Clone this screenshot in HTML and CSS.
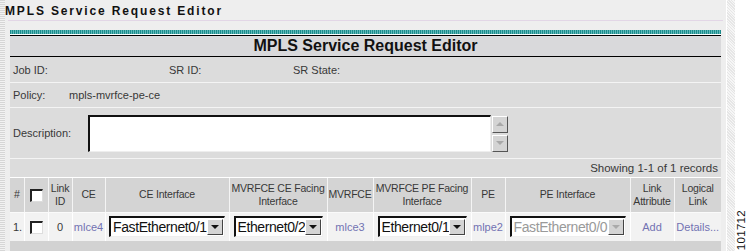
FILE: index.html
```html
<!DOCTYPE html>
<html lang="en">
<head>
  <meta charset="UTF-8" />
  <title>MPLS Service Request Editor</title>
  <link rel="stylesheet" href="styles.css">
</head>
<body>
  <div class="page">
    <div class="edge"></div>
    <div class="main">
      <div class="page-title">MPLS Service Request Editor</div>
      <div class="rule"></div>
      <div class="panel">
        <div class="band"></div>
        <div class="panel-head">MPLS Service Request Editor</div>
        <div class="row info">
          <span class="job">Job ID:</span>
          <span class="srid">SR ID:</span>
          <span class="state">SR State:</span>
        </div>
        <div class="row policy">
          <span class="label">Policy:</span>
          <span>mpls-mvrfce-pe-ce</span>
        </div>
        <div class="row desc">
          <span class="label">Description:</span>
          <div class="textarea">
            <div class="text-box"></div>
            <div class="scroll">
              <span class="sbtn"><i class="tri up"></i></span>
              <span class="sbtn"><i class="tri down"></i></span>
            </div>
          </div>
        </div>
        <div class="row count">Showing 1-1 of 1 records</div>
        <table class="grid">
          <colgroup>
            <col style="width:14px"><col style="width:24px"><col style="width:24px"><col style="width:33px">
            <col style="width:124px"><col style="width:98px"><col style="width:46px"><col style="width:98px">
            <col style="width:34px"><col style="width:125px"><col style="width:44px"><col style="width:47px">
          </colgroup>
          <thead>
            <tr>
              <th>#</th>
              <th><span class="check"></span></th>
              <th>Link<br>ID</th>
              <th>CE</th>
              <th>CE Interface</th>
              <th>MVRFCE CE Facing<br>Interface</th>
              <th>MVRFCE</th>
              <th>MVRFCE PE Facing<br>Interface</th>
              <th>PE</th>
              <th>PE Interface</th>
              <th>Link<br>Attribute</th>
              <th>Logical<br>Link</th>
            </tr>
          </thead>
          <tbody>
            <tr>
              <td class="num">1.</td>
              <td><span class="check"></span></td>
              <td>0</td>
              <td><a href="#">mlce4</a></td>
              <td><div class="select wide"><span class="val">FastEthernet0/1</span><span class="arrow"><i class="tri down"></i></span></div></td>
              <td><div class="select"><span class="val">Ethernet0/2</span><span class="arrow"><i class="tri down"></i></span></div></td>
              <td><a href="#">mlce3</a></td>
              <td><div class="select"><span class="val">Ethernet0/1</span><span class="arrow"><i class="tri down"></i></span></div></td>
              <td><a href="#">mlpe2</a></td>
              <td><div class="select wide off"><span class="val">FastEthernet0/0</span><span class="arrow"><i class="tri down"></i></span></div></td>
              <td><a href="#">Add</a></td>
              <td><a href="#">Details...</a></td>
            </tr>
          </tbody>
        </table>
        <div class="foot"></div>
      </div>
    </div>
    <div class="dots"></div>
    <div class="side"><span class="fig">101712</span></div>
  </div>
</body>
</html>
```

FILE: styles.css
```css
* {
  margin: 0;
  padding: 0;
  box-sizing: border-box;
}
body {
  font-family: 'Liberation Sans', Arial, sans-serif;
  font-size: 11px;
  color: #383838;
  background: #fff;
}
.page {
  display: flex;
  height: 251px;
  overflow: hidden;
}
.edge {
  width: 5px;
  background: repeating-linear-gradient(0deg, #d6d6d6 0 1px, #f2f2f2 1px 2px);
}
.main {
  width: 722px;
  background: #eeeeee;
  display: flex;
  flex-direction: column;
}
.main > *,
.panel > * {
  flex-shrink: 0;
}
.page-title {
  font-size: 12px;
  font-weight: bold;
  letter-spacing: 1.85px;
  color: #111;
  padding: 4px 0 0 0;
  height: 20px;
}
.rule {
  height: 1px;
  margin: 0 3px 0 3px;
  background: #e2d6e6;
}
.panel {
  margin: 9px 0 0 5px;
  width: 711px;
  background: #dcdcdc;
  flex: 1 0 auto;
}
.band {
  height: 5px;
  background: repeating-linear-gradient(90deg, #1d8c8c 0 1px, #5fb9b9 1px 2px);
  border-bottom: 1px solid #fff;
}
.panel-head {
  border-top: 1px solid #000;
  border-bottom: 1px solid #000;
  background: #d9d9db;
  height: 22px;
  text-align: center;
  font-size: 16px;
  font-weight: bold;
  color: #111;
  line-height: 20px;
}
.row {
  display: flex;
  align-items: center;
  padding-left: 3px;
  border-bottom: 1px solid #f4f4f4;
}
.info {
  height: 26px;
}
.info .job { width: 156px; }
.info .srid { width: 124px; }
.policy {
  height: 25px;
}
.policy .label {
  width: 56px;
}
.desc {
  height: 51px;
}
.desc .label {
  width: 75px;
}
.textarea {
  display: flex;
  gap: 1px;
}
.text-box {
  width: 403px;
  height: 37px;
  background: #fff;
  border-top: 2px solid #111;
  border-left: 2px solid #111;
  border-right: 1px solid #eee;
  border-bottom: 1px solid #eee;
}
.scroll {
  display: flex;
  flex-direction: column;
  gap: 2px;
  padding-top: 1px;
}
.sbtn {
  width: 16px;
  height: 17px;
  background: #d4d4d4;
  border: 1px solid;
  border-color: #fff #555 #555 #fff;
  display: flex;
  align-items: center;
  justify-content: center;
}
.tri {
  width: 0;
  height: 0;
  border-left: 4px solid transparent;
  border-right: 4px solid transparent;
}
.tri.up { border-bottom: 4px solid #a8a8a8; }
.tri.down { border-top: 4px solid #a8a8a8; }
.count {
  height: 19px;
  justify-content: flex-end;
  padding-right: 3px;
  font-size: 11.5px;
  border-bottom: 1px solid #fff;
}
.grid {
  width: 711px;
  table-layout: fixed;
  border-collapse: collapse;
}
.grid th {
  background: #d4d4d4;
  font-weight: normal;
  height: 34px;
  line-height: 13px;
  padding: 0;
  text-align: center;
  border-left: 1px solid #f4f4f4;
  border-bottom: 1px solid #fafafa;
  font-size: 10.5px;
  letter-spacing: -0.2px;
  white-space: nowrap;
}
.grid th:first-child,
.grid td:first-child {
  border-left: none;
}
.grid td {
  background: #f2f2f2;
  height: 29px;
  padding: 0;
  text-align: center;
  border-left: 1px solid #fff;
  font-size: 11px;
  white-space: nowrap;
}
.grid td.num {
  text-align: left;
  padding-left: 3px;
}
.grid a {
  color: #7373b3;
  text-decoration: none;
}
.check {
  display: inline-block;
  width: 13px;
  height: 13px;
  background: #fff;
  border-top: 2px solid #222;
  border-left: 2px solid #222;
  border-right: 1px solid #ddd;
  border-bottom: 1px solid #ddd;
  vertical-align: middle;
}
.select {
  display: inline-flex;
  align-items: center;
  width: 89px;
  height: 21px;
  background: #fff;
  border-top: 2px solid #111;
  border-left: 2px solid #111;
  border-right: 1px solid #eee;
  border-bottom: 1px solid #eee;
  vertical-align: middle;
  text-align: left;
}
.select.wide {
  width: 116px;
}
.select .val {
  flex: 1;
  font-size: 14px;
  letter-spacing: -0.4px;
  color: #111;
  padding-left: 2px;
  white-space: nowrap;
  overflow: hidden;
}
.select.off .val {
  color: #9a9a9a;
}
.select .arrow {
  width: 16px;
  height: 16px;
  margin-right: 1px;
  background: #d4d4d4;
  border: 1px solid;
  border-color: #fff #444 #444 #fff;
  display: flex;
  align-items: center;
  justify-content: center;
}
.select .arrow .tri.down {
  border-top-color: #111;
}
.select.off .arrow .tri.down {
  border-top-color: #aaa;
}
.foot {
  height: 10px;
  background: #d2d2d2;
}
.dots {
  width: 8px;
  margin-left: 1px;
  background: repeating-linear-gradient(45deg, #e6e6e6 0 1px, #f6f6f6 1px 2px);
}
.side {
  flex: 1;
  display: flex;
  align-items: flex-end;
  justify-content: center;
  padding-bottom: 1px;
}
.fig {
  writing-mode: vertical-rl;
  transform: rotate(180deg);
  font-size: 11.5px;
  letter-spacing: 0.3px;
  color: #111;
}
```
